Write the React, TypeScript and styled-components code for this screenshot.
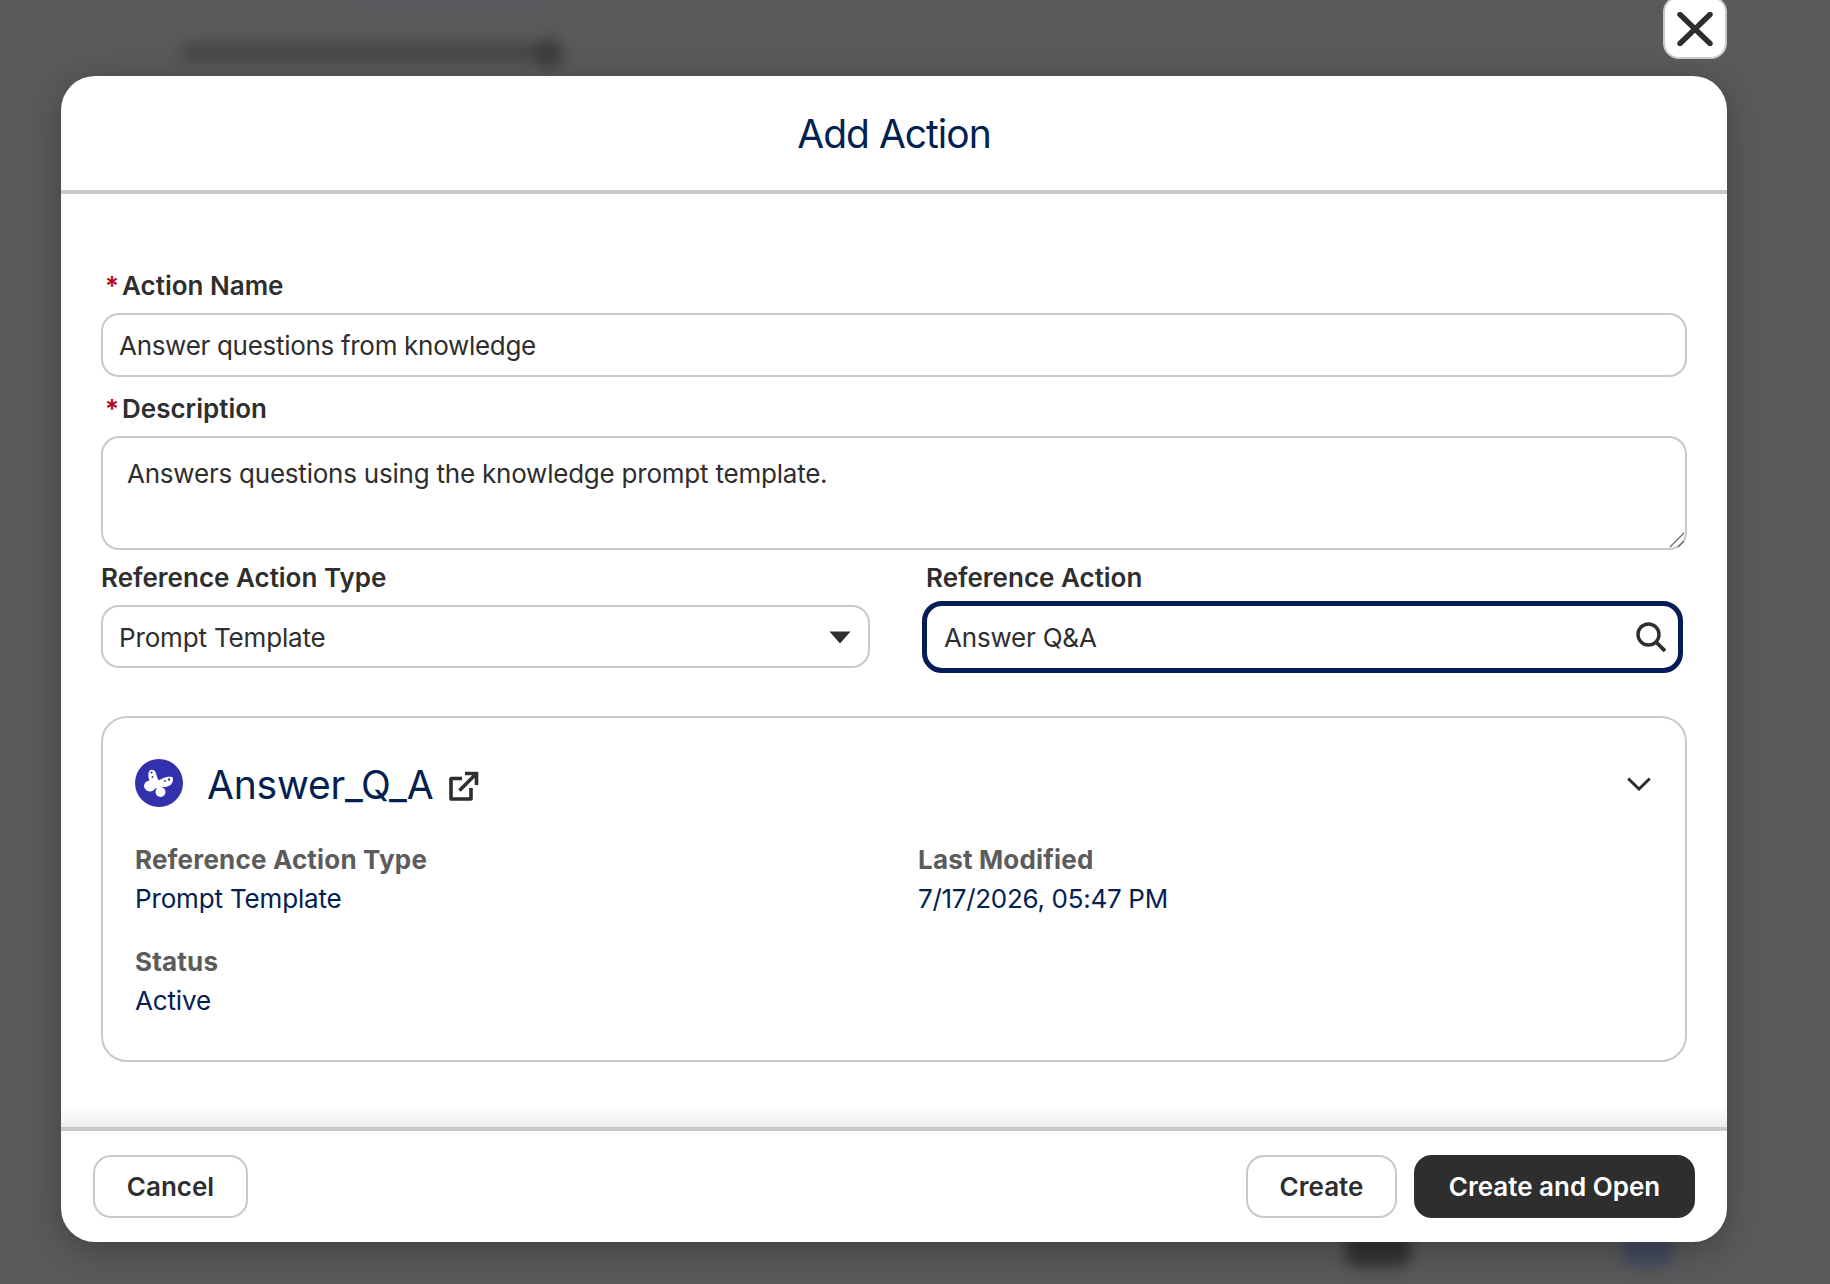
import React from "react";
import styled, { createGlobalStyle } from "styled-components";

const GlobalStyle = createGlobalStyle`
  html, body {
    margin: 0;
    padding: 0;
    background: #5a5a5a;
  }
  * {
    box-sizing: border-box;
  }
`;

const FONT = `Inter, "Noto Sans", "Liberation Sans", sans-serif`;

const Butterfly = () => (
  <svg width="48" height="48" viewBox="0 0 48 48">
    <circle cx="24" cy="24" r="24" fill="#3330ae" />
    <g fill="#fff">
      <path d="M14 12.5C15.5 9.8 19 10.5 20.5 13L23.5 22.5L20 25L14.5 22C13.2 19 13 15 14 12.5Z" />
      <path d="M23 22C26 19.5 33 17 37 18C38.8 19 38 23 36 25.5C33.5 28 28 29 24 27Z" />
      <ellipse cx="15" cy="27" rx="6" ry="5.4" />
      <ellipse cx="25.5" cy="33" rx="5" ry="5" />
      <path d="M16 22 L23 20 L27 26 L25 30 L19 29 Z" />
    </g>
    <circle cx="16.5" cy="13.5" r="1.1" fill="#3330ae" />
    <circle cx="17.5" cy="18" r="1" fill="#3330ae" />
    <circle cx="34" cy="20.5" r="1.2" fill="#3330ae" />
    <circle cx="30" cy="22" r="0.9" fill="#3330ae" />
  </svg>
);

const ExternalIcon = () => (
  <svg width="30" height="30" viewBox="0 0 30 30" fill="none" stroke="#2e2e2e" strokeWidth="3.6">
    <path d="M13 7.5H2v20.5h20V17" strokeLinejoin="round" />
    <path d="M10.5 19.5 27 3" />
    <path d="M16 2.5h11.5V14" />
  </svg>
);

const SearchIcon = () => (
  <svg width="30" height="30" viewBox="0 0 30 30" fill="none" stroke="#2e2e2e" strokeWidth="3.4">
    <circle cx="12.5" cy="12.5" r="10.5" />
    <path d="M20 20 29 29" strokeWidth="3.8" />
  </svg>
);

const ChevronIcon = () => (
  <svg width="24" height="14" viewBox="0 0 24 14" fill="none" stroke="#2e2e2e" strokeWidth="3">
    <path d="M1.2 1.5 12 12 22.8 1.5" />
  </svg>
);

const CloseIcon = () => (
  <svg width="36" height="34" viewBox="0 0 36 34" fill="none" stroke="#2e2e2e" strokeWidth="5.4" strokeLinecap="round">
    <path d="M3 2.5 33 31.5" />
    <path d="M33 2.5 3 31.5" />
  </svg>
);

const CaretIcon = () => (
  <svg width="22" height="13" viewBox="0 0 22 13">
    <path d="M0.5 0.5H21.5L11 12.5Z" fill="#2e2e2e" />
  </svg>
);

const GripIcon = () => (
  <svg width="16" height="16" viewBox="0 0 16 16" fill="none" stroke="#6b6b6b" strokeWidth="1.3">
    <path d="M1 15 15 1" />
    <path d="M9 15 15 9" />
  </svg>
);

export default function App() {
  return (
    <>
      <GlobalStyle />
      <Page>
        <BlurredSpot $left={350} $top={-12} $width={200} $height={18} $color="#585b61" />
        <BlurredSpot $left={180} $top={43} $width={370} $height={18} $color="#464646" />
        <BlurredSpot $left={535} $top={40} $width={28} $height={26} $color="#3c3c3c" />
        <BlurredSpot $left={1345} $top={1225} $width={66} $height={42} $color="#333333" />
        <BlurredSpot $left={1622} $top={1225} $width={50} $height={42} $color="#434a5e" />
        <Modal>
          <CloseButton>
            <CloseIcon />
          </CloseButton>
          <Header>
            <Title>Add Action</Title>
          </Header>
          <Body>
            <Label>
              <Star>*</Star>Action Name
            </Label>
            <TextInput readOnly value="Answer questions from knowledge" />
            <Label $top={16}>
              <Star>*</Star>Description
            </Label>
            <TextAreaWrap>
              <TextArea readOnly value="Answers questions using the knowledge prompt template." />
              <Grip>
                <GripIcon />
              </Grip>
            </TextAreaWrap>
            <Columns>
              <div>
                <Label $top={12}>Reference Action Type</Label>
                <SelectBox>
                  Prompt Template
                  <CaretIcon />
                </SelectBox>
              </div>
              <div>
                <Label $top={12}>Reference Action</Label>
                <FocusedSearch>
                  Answer Q&amp;A
                  <SearchIcon />
                </FocusedSearch>
              </div>
            </Columns>
            <Card>
              <CardHeader>
                <Butterfly />
                <CardTitle>Answer_Q_A</CardTitle>
                <ExternalLink>
                  <ExternalIcon />
                </ExternalLink>
                <CollapseToggle>
                  <ChevronIcon />
                </CollapseToggle>
              </CardHeader>
              <Details>
                <div>
                  <DetailLabel>Reference Action Type</DetailLabel>
                  <DetailValue>Prompt Template</DetailValue>
                </div>
                <div>
                  <DetailLabel>Last Modified</DetailLabel>
                  <DetailValue $tracking={-0.3}>7/17/2026, 05:47 PM</DetailValue>
                </div>
                <div>
                  <DetailLabel>Status</DetailLabel>
                  <DetailValue>Active</DetailValue>
                </div>
              </Details>
            </Card>
          </Body>
          <Footer>
            <Button>Cancel</Button>
            <FooterRight>
              <Button $width={151}>Create</Button>
              <PrimaryButton>Create and Open</PrimaryButton>
            </FooterRight>
          </Footer>
        </Modal>
      </Page>
    </>
  );
}

const Page = styled.div`
  position: relative;
  width: 1830px;
  height: 1284px;
  padding: 76px 0 0 61px;
  overflow: hidden;
  background: #5a5a5a;
  font-family: ${FONT};
`;

const BlurredSpot = styled.div<{
  $left: number;
  $top: number;
  $width: number;
  $height: number;
  $color: string;
}>`
  position: absolute;
  left: ${(p) => p.$left}px;
  top: ${(p) => p.$top}px;
  width: ${(p) => p.$width}px;
  height: ${(p) => p.$height}px;
  background: ${(p) => p.$color};
  border-radius: 12px;
  filter: blur(7px);
`;

const Modal = styled.div`
  position: relative;
  width: 1666px;
  height: 1166px;
  background: #fff;
  border-radius: 34px;
  box-shadow: 0 8px 34px rgba(0, 0, 0, 0.28);
  display: flex;
  flex-direction: column;
`;

const CloseButton = styled.button`
  position: absolute;
  top: -80px;
  right: 0;
  width: 64px;
  height: 63px;
  padding: 2px 0 0;
  background: #fff;
  border: 2px solid #c9c9c9;
  border-radius: 16px;
  display: flex;
  align-items: center;
  justify-content: center;
`;

const Header = styled.div`
  height: 118px;
  border-bottom: 4px solid #c9c9c9;
  display: flex;
  align-items: center;
  justify-content: center;
`;

const Title = styled.h1`
  margin: 0;
  font-size: 39px;
  font-weight: 400;
  color: #032150;
  letter-spacing: -1px;
`;

const Body = styled.div`
  flex: 1;
  padding: 76px 40px 0;
  position: relative;
  &::after {
    content: "";
    position: absolute;
    left: 0;
    right: 0;
    bottom: 0;
    height: 22px;
    background: linear-gradient(to bottom, rgba(0, 0, 0, 0), rgba(0, 0, 0, 0.07));
  }
`;

const Label = styled.label<{ $top?: number }>`
  display: block;
  margin: ${(p) => p.$top ?? 0}px 0 11px 0;
  height: 32px;
  line-height: 32px;
  font-size: 26px;
  font-weight: 600;
  color: #2e2e2e;
`;

const Star = styled.span`
  color: #ba0517;
  font-weight: 600;
  margin: 0 3px 0 4px;
`;

const inputStyles = `
  display: block;
  width: 100%;
  font-family: ${FONT};
  font-size: 26px;
  color: #2e2e2e;
  background: #fff;
  border: 2px solid #c9c9c9;
  outline: none;
`;

const TextInput = styled.input`
  ${inputStyles}
  height: 64px;
  padding: 0 16px;
  border-radius: 18px;
  letter-spacing: -0.3px;
`;

const TextAreaWrap = styled.div`
  position: relative;
`;

const TextArea = styled.textarea`
  ${inputStyles}
  height: 114px;
  padding: 20px 24px;
  border-radius: 18px;
  line-height: 32px;
  letter-spacing: -0.22px;
  resize: none;
`;

const Grip = styled.div`
  position: absolute;
  right: 2px;
  bottom: 2px;
  width: 16px;
  height: 16px;
  line-height: 0;
`;

const Columns = styled.div`
  display: grid;
  grid-template-columns: 769px 761px;
  column-gap: 56px;
`;

const SelectBox = styled.div`
  height: 63px;
  padding: 1px 17px 0 16px;
  font-size: 26px;
  color: #2e2e2e;
  letter-spacing: -0.16px;
  border: 2px solid #c9c9c9;
  border-radius: 18px;
  display: flex;
  align-items: center;
  justify-content: space-between;
`;

const FocusedSearch = styled.div`
  height: 72px;
  margin: -4px 4px -5px -4px;
  padding: 0 12px 0 17px;
  font-size: 26px;
  color: #2e2e2e;
  letter-spacing: -0.2px;
  border: 5px solid #061c57;
  border-radius: 20px;
  display: flex;
  align-items: center;
  justify-content: space-between;
`;

const Card = styled.div`
  margin-top: 48px;
  height: 346px;
  padding: 41px 32px 0;
  border: 2px solid #c9c9c9;
  border-radius: 26px;
`;

const CardHeader = styled.div`
  height: 48px;
  display: flex;
  align-items: center;
`;

const CardTitle = styled.div`
  margin: 2px 16px 0 24px;
  font-size: 39px;
  color: #032150;
  letter-spacing: -0.2px;
`;

const ExternalLink = styled.span`
  display: flex;
  margin-top: 6px;
`;

const CollapseToggle = styled.div`
  margin-left: auto;
  padding: 2px 2px 0 0;
  display: flex;
`;

const Details = styled.div`
  margin-top: 37px;
  display: grid;
  grid-template-columns: 783px 1fr;
  row-gap: 31px;
`;

const DetailLabel = styled.div`
  height: 32px;
  line-height: 32px;
  margin-bottom: 7px;
  font-size: 26px;
  font-weight: 700;
  color: #5c5c5c;
  letter-spacing: 0.18px;
`;

const DetailValue = styled.div<{ $tracking?: number }>`
  height: 32px;
  line-height: 32px;
  font-size: 26px;
  color: #032150;
  letter-spacing: ${(p) => p.$tracking ?? -0.16}px;
`;

const Footer = styled.div`
  height: 115px;
  padding: 24px 32px 0;
  border-top: 4px solid #c9c9c9;
  display: flex;
  align-items: flex-start;
  justify-content: space-between;
`;

const FooterRight = styled.div`
  display: flex;
  gap: 17px;
`;

const Button = styled.button<{ $width?: number }>`
  width: ${(p) => p.$width ?? 155}px;
  height: 63px;
  padding: 0;
  font-family: ${FONT};
  font-size: 26px;
  font-weight: 600;
  color: #2e2e2e;
  background: #fff;
  border: 2px solid #c9c9c9;
  border-radius: 18px;
`;

const PrimaryButton = styled(Button)`
  width: 281px;
  color: #fff;
  background: #2e2e2e;
  border-color: #2e2e2e;
`;
